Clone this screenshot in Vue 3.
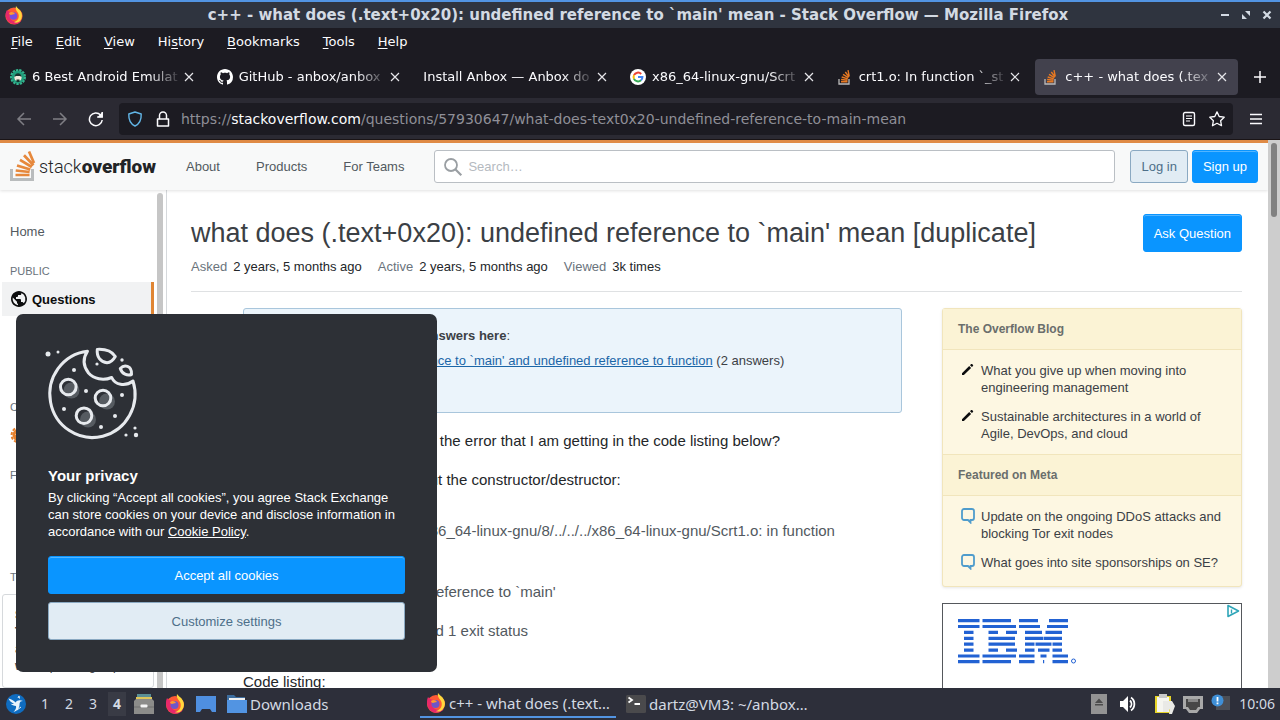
<template>
  <div class="desktop">
    <header class="titlebar">
      <svg class="icon-20" viewBox="0 0 20 20">
        <circle cx="10" cy="11" r="8.6" fill="#ff5a36" />
        <path d="M3 5C1 8 1 14 5 17c4 3.400 10 2.600 12.500-1.500C14 18 8 17 6 13 5 10 6 8 8 7 6 7 4 6 3 5z" fill="#e8286b" />
        <path d="M12 1c1 2 3 3 4.500 5 2 3 2 7-.5 10-2 2-5 2-6 1 4-1 6-5 4-9-1-2-3-3-2-7z" fill="#ffd83d" />
        <circle cx="9.500" cy="11" r="3.800" fill="#7a4be0" />
        <path d="M5 8c2-2 5-1 6 1-2 0-3 1-4 1s-2-1-2-2z" fill="#ff9a2e" />
      </svg>
      <h1>{{ windowTitle }} — Mozilla Firefox</h1>
      <div class="window-controls">
        <button aria-label="Minimize">
          <svg width="10" height="10" viewBox="0 0 10 10"><path d="M1 5h8" stroke="#d3dae3" stroke-width="2" /></svg>
        </button>
        <button aria-label="Restore">
          <svg width="10" height="10" viewBox="0 0 10 10"><path d="M4 1h5v5zM1 4v5h5z" fill="#d3dae3" /></svg>
        </button>
        <button aria-label="Close">
          <svg width="10" height="10" viewBox="0 0 10 10"><path d="M1.500 1.500l7 7M8.500 1.500l-7 7" stroke="#d3dae3" stroke-width="2.200" /></svg>
        </button>
      </div>
    </header>

    <nav class="menubar">
      <button v-for="item in menus" :key="item.key + item.after">{{ item.before }}<u>{{ item.key }}</u>{{ item.after }}</button>
    </nav>

    <div class="tabstrip">
      <div class="tabs">
        <div v-for="tab in tabs" :key="tab.title" class="tab-slot">
          <div class="tab" :class="{ active: tab.active }">
            <svg v-if="tab.icon === 'android'" class="icon-16" viewBox="0 0 16 16">
              <circle cx="8" cy="8" r="6.500" fill="#1f9d7c" />
              <circle cx="8" cy="8" r="7" fill="none" stroke="#35b58f" stroke-width="2" stroke-dasharray="2.400 1" />
              <circle cx="8" cy="8.500" r="3.600" fill="#f2e9dc" />
              <path d="M4.500 8c0-5 7-5 7 0l-1.500-1h-4z" fill="#17332d" />
              <path d="M6.500 10.500h3V13h-3z" fill="#17332d" />
            </svg>
            <svg v-else-if="tab.icon === 'github'" class="icon-16" viewBox="0 0 16 16">
              <path fill="#fff" d="M8 0C3.580 0 0 3.580 0 8c0 3.540 2.290 6.530 5.470 7.590.4.070.55-.17.55-.38 0-.19-.01-.82-.01-1.490-2.010.37-2.530-.49-2.690-.94-.09-.23-.48-.94-.82-1.130-.28-.15-.68-.52-.01-.53.63-.01 1.080.58 1.230.82.72 1.210 1.870.87 2.330.66.07-.52.28-.87.51-1.070-1.780-.2-3.640-.89-3.640-3.950 0-.87.31-1.590.82-2.150-.08-.2-.36-1.020.08-2.120 0 0 .67-.21 2.200.82.64-.18 1.320-.27 2-.27s1.360.09 2 .27c1.530-1.040 2.200-.82 2.200-.82.44 1.100.16 1.920.08 2.120.51.56.82 1.270.82 2.150 0 3.070-1.870 3.750-3.650 3.950.29.25.54.73.54 1.480 0 1.070-.01 1.930-.01 2.200 0 .21.15.46.55.38A8.010 8.010 0 0 0 16 8c0-4.420-3.580-8-8-8z" />
            </svg>
            <svg v-else-if="tab.icon === 'google'" class="icon-16" viewBox="0 0 16 16">
              <circle cx="8" cy="8" r="8" fill="#fff" />
              <g fill="none" stroke-width="2">
                <path d="M11.200 5A4.400 4.400 0 0 0 4 6.200" stroke="#ea4335" />
                <path d="M4 6.200a4.400 4.400 0 0 0 0 3.600" stroke="#fbbc05" />
                <path d="M4 9.800a4.400 4.400 0 0 0 7 1.500" stroke="#34a853" />
                <path d="M8 8h4.400a4.400 4.400 0 0 1-1.400 3.300" stroke="#4285f4" />
              </g>
            </svg>
            <svg v-else-if="tab.icon === 'stack'" class="icon-16" viewBox="0 0 16 16">
              <path d="M2 10v5h10v-5" fill="none" stroke="#bcbbbb" stroke-width="1.300" />
              <path d="M4 12.800h6.500M4.100 10.500l6.400.7M4.700 8l6.100 1.800M6 5.300l5.400 3.400M8.300 3l3.900 5M11 1.200l1.200 6" stroke="#e87922" stroke-width="1.400" />
            </svg>
            <span class="tab-title">{{ tab.title }}</span>
            <button class="tab-close" aria-label="Close tab">
              <svg width="10" height="10" viewBox="0 0 10 10"><path d="M1 1l8 8M9 1L1 9" stroke="#e6e6ea" stroke-width="1.200" /></svg>
            </button>
          </div>
        </div>
      </div>
      <button class="new-tab" aria-label="New tab">
        <svg width="14" height="14" viewBox="0 0 14 14"><path d="M7 1v12M1 7h12" stroke="#fbfbfe" stroke-width="1.500" /></svg>
      </button>
    </div>

    <div class="toolbar">
      <button class="nav-btn dim" aria-label="Back">
        <svg class="icon-16" viewBox="0 0 16 16"><path d="M15 8H2M8 2L2 8l6 6" /></svg>
      </button>
      <button class="nav-btn dim" aria-label="Forward">
        <svg class="icon-16" viewBox="0 0 16 16"><path d="M1 8h13M8 2l6 6-6 6" /></svg>
      </button>
      <button class="nav-btn" aria-label="Reload">
        <svg class="icon-16" viewBox="0 0 16 16"><path d="M14.200 9A6.400 6.400 0 1 1 12.600 4M14.200 1v5h-5" /><path d="M14.500 1v5.200H9.300z" fill="#fbfbfe" stroke="none" /></svg>
      </button>
      <div class="urlbar">
        <div class="url-icons">
          <svg class="icon-16" viewBox="0 0 16 16"><path d="M8 1L14.200 3c.3 6-2 10-6.200 12C3.800 13 1.500 9 1.800 3z" fill="none" stroke="#62b5e6" stroke-width="1.400" stroke-linejoin="round" /></svg>
          <svg class="icon-16" viewBox="0 0 16 16"><path d="M2.500 8h11v7h-11zM4.500 8V4.500a3.500 3.500 0 0 1 7 0V8" fill="none" stroke="#fbfbfe" stroke-width="1.500" stroke-linejoin="round" /></svg>
        </div>
        <div class="url">https://<b>stackoverflow.com</b>/questions/57930647/what-does-text0x20-undefined-reference-to-main-mean</div>
        <div class="url-icons">
          <button aria-label="Reader view">
            <svg class="icon-16" viewBox="0 0 16 16"><rect x="2.500" y="1.500" width="11" height="13" rx="1.500" fill="none" stroke="#fbfbfe" stroke-width="1.400" /><path d="M5 5h6M5 7.500h6M5 10h4" stroke="#fbfbfe" stroke-width="1.200" /></svg>
          </button>
          <button aria-label="Bookmark this page">
            <svg class="icon-16" viewBox="0 0 16 16"><path d="M8 .9l2.200 4.600 5 .7-3.600 3.500.9 5L8 12.300l-4.500 2.400.9-5L.8 6.200l5-.7z" fill="none" stroke="#fbfbfe" stroke-width="1.300" stroke-linejoin="round" /></svg>
          </button>
        </div>
      </div>
      <button class="nav-btn" aria-label="Open application menu">
        <svg class="icon-16" viewBox="0 0 16 16"><path d="M2 3.500h12M2 8h12M2 12.500h12" /></svg>
      </button>
    </div>

    <div class="viewport">
      <div class="page">
        <header class="topbar">
          <a href="#" class="logo">
            <svg width="26" height="31" viewBox="0 0 26 31">
              <path d="M1.500 18v10.500h21V18" fill="none" stroke="#b9bcbd" stroke-width="3" />
              <path d="M5.500 24h14M5.700 19.500l13.900 1.500M7 14.500l13.300 4M10 8.800l11.800 7.200M14 4.200l9.500 10M19 .5l5 11.500" stroke="#e6883c" stroke-width="2.700" fill="none" />
            </svg>
            <span class="logo-text">stack<b>overflow</b></span>
          </a>
          <nav class="topnav">
            <a href="#">About</a>
            <a href="#">Products</a>
            <a href="#">For Teams</a>
          </nav>
          <label class="search">
            <svg width="20" height="20" viewBox="0 0 20 20"><circle cx="8" cy="8" r="6" fill="none" stroke="#9a9fa3" stroke-width="1.800" /><path d="M12.300 12.300l6 6" stroke="#9a9fa3" stroke-width="2.200" /></svg>
            <input type="text" placeholder="Search…" aria-label="Search" />
          </label>
          <div class="auth">
            <button class="btn btn-light">Log in</button>
            <button class="btn btn-primary">Sign up</button>
          </div>
        </header>

        <div class="container">
          <aside class="left-nav">
            <div class="left-list">
              <a href="#" class="left-link">Home</a>
              <template v-for="group in leftGroups" :key="group.label">
                <div class="left-label">{{ group.label }}</div>
                <a v-for="link in group.links" :key="link.text" href="#" class="left-link" :class="{ current: link.current, nested: !link.icon }">
                  <svg v-if="link.icon === 'globe'" width="18" height="18" viewBox="0 0 18 18"><path fill="#0c0d0e" d="M9 1C4.640 1 1 4.640 1 9c0 4.360 3.640 8 8 8 4.360 0 8-3.640 8-8 0-4.360-3.640-8-8-8zM8 15.320a6.460 6.460 0 0 1-4.300-2.740 6.460 6.460 0 0 1-.93-5.010L7 11.680v.8c0 .88.120 1.320 1 1.320v1.520zm5.720-2c-.2-.66-1-1.320-1.720-1.320h-1v-2c0-.44-.56-1-1-1H6V7h1c.44 0 1-.56 1-1V5h2c.88 0 1.400-.72 1.400-1.600v-.33a6.450 6.450 0 0 1 3.830 4.510 6.450 6.450 0 0 1-1.510 5.730z" /></svg>
                  <svg v-if="link.icon === 'star'" width="18" height="18" viewBox="0 0 18 18"><circle cx="9" cy="9" r="6.500" fill="#e6812d" /><circle cx="9" cy="9" r="7.400" fill="none" stroke="#e6812d" stroke-width="2" stroke-dasharray="3 1.600" /><path d="M9 5l1.200 2.600 2.800.3-2.100 1.900.6 2.800L9 11.200l-2.500 1.400.6-2.800L5 7.900l2.800-.3z" fill="#fff" /></svg>
                  {{ link.text }}
                </a>
              </template>
              <div class="left-label">TEAMS</div>
              <div class="teams-card"><b>Stack Overflow for Teams</b> – Collaborate and share knowledge with a private group.</div>
            </div>
            <div class="left-scroll"></div>
          </aside>

          <main class="content">
            <div class="question-head">
              <h2>what does (.text+0x20): undefined reference to `main' mean [duplicate]</h2>
              <button class="btn btn-primary btn-tall">Ask Question</button>
            </div>
            <div class="question-meta">
              <span v-for="stat in stats" :key="stat.label"><em>{{ stat.label }}</em>{{ stat.value }}</span>
            </div>

            <div class="columns">
              <article class="post">
                <div class="notice">
                  <p><b>This question already has answers here</b>:</p>
                  <p><a href="#">Linker error: Undefined reference to `main' and undefined reference to function</a> (2 answers)</p>
                  <p>Closed 2 years ago.</p>
                </div>
                <p>Could anyone please explain the error that I am getting in the code listing below?</p>
                <p>It is always complaining about the constructor/destructor:</p>
                <blockquote>
                  <p>/usr/bin/ld: /usr/lib/gcc/x86_64-linux-gnu/8/../../../x86_64-linux-gnu/Scrt1.o: in function `_start':</p>
                  <p>(.text+0x20): undefined reference to `main'</p>
                  <p>collect2: error: ld returned 1 exit status</p>
                </blockquote>
                <p>Code listing:</p>
              </article>

              <aside class="right-col">
                <div class="bulletin">
                  <section v-for="box in bulletin" :key="box.title">
                    <h3>{{ box.title }}</h3>
                    <ul>
                      <li v-for="entry in box.entries" :key="entry">
                        <svg v-if="box.icon === 'pencil'" width="14" height="14" viewBox="0 0 14 14"><path d="M1 11.200L8.200 4l1.900 1.900L2.900 13H1zM9 3.200l1.100-1.100c.3-.3.700-.3 1 0l.9.9c.3.300.3.700 0 1L10.900 5.100z" fill="#0c0d0e" /></svg>
                        <svg v-else width="14" height="16" viewBox="0 0 14 16"><path d="M3 1h8a2 2 0 0 1 2 2v7a2 2 0 0 1-2 2H9.500v2.500L7 12H3a2 2 0 0 1-2-2V3a2 2 0 0 1 2-2z" fill="none" stroke="#4f9ccc" stroke-width="1.800" /></svg>
                        <a href="#">{{ entry }}</a>
                      </li>
                    </ul>
                  </section>
                </div>
                <div class="ad">
                  <svg width="120" height="46" viewBox="0 0 120 46" role="img" aria-label="IBM">
                    <g stroke="#2262d3" stroke-width="3.200">
                      <path d="M0 1.600h21.500M0 7.500h21.500M6 13.400h9.500M6 19.300h9.500M6 25.200h9.500M6 31.100h9.500M0 37h21.500M0 42.700h21.500" />
                      <path d="M24.500 1.600H53M24.500 7.500H58M30.500 13.400H40M48 13.400h11M30.500 19.300H57M30.500 25.200H57M30.500 31.100H40M48 31.100h11M24.500 37H58M24.500 42.700H53" />
                      <path d="M61 1.600h19M91 1.600h19M61 7.500h21M89 7.500h21M67 13.400h17M87.500 13.400H104M67 19.300h18.500M86 19.300h18M67 25.200h9.500M77.500 25.200h16M94.500 25.200h9.500M67 31.100h9.500M80 31.100h11.500M94.500 31.100h9.500M61 37h15.500M82.500 37h6M94.500 37H110M61 42.700h15.500M85 42.700h1.200M94.500 42.700H110" />
                    </g>
                    <circle cx="115.500" cy="42" r="2" fill="none" stroke="#2262d3" />
                  </svg>
                  <a href="#" class="adchoices" aria-label="AdChoices">
                    <svg width="16" height="14" viewBox="0 0 16 14"><path d="M3 1.500L13.500 7 3 12.500z" fill="none" stroke="#2fa5b8" stroke-width="1.600" stroke-linejoin="round" /><path d="M6.500 5.500v4" stroke="#2fa5b8" stroke-width="1.400" /></svg>
                  </a>
                </div>
              </aside>
            </div>
          </main>
        </div>
      </div>
      <div class="page-scroll"><div class="thumb"></div></div>

      <section class="privacy">
        <svg class="cookie" width="90" height="92" viewBox="0 0 90 92">
          <g fill="#565b61">
            <circle cx="23.500" cy="44.500" r="8" />
            <circle cx="59" cy="55.500" r="8" />
            <circle cx="40" cy="73.500" r="8" />
          </g>
          <g fill="none" stroke="#e7eaee" stroke-width="3" stroke-linejoin="round">
            <path d="M39.500 5.200A42.600 43.300 0 1 0 85 35C77 41 67 39 63.700 31.500 55 35 46 33 40.500 27 35 20 35 12 39.500 5.200z" />
            <path d="M49.300 3.400C57 3 64 5.500 67.300 10.500 65 14.500 63 16.500 59 16.700 52.500 16 48.500 11 49.300 3.400z" />
            <path d="M72.300 22.500C76 18.500 84 19 83.500 28.500 79.500 30 74 28 72.300 22.500z" />
            <circle cx="20.300" cy="41" r="7.800" />
            <circle cx="55" cy="52" r="7.800" />
            <circle cx="36" cy="69.700" r="7.800" />
          </g>
          <g fill="#e7eaee">
            <circle v-for="dot in crumbs" :key="dot.join()" :cx="dot[0]" :cy="dot[1]" :r="dot[2]" />
          </g>
        </svg>
        <h2>Your privacy</h2>
        <p>By clicking “Accept all cookies”, you agree Stack Exchange can store cookies on your device and disclose information in accordance with our <a href="#">Cookie Policy</a>.</p>
        <button class="btn btn-primary btn-tall">Accept all cookies</button>
        <button class="btn btn-light btn-tall">Customize settings</button>
      </section>
    </div>

    <footer class="taskbar">
      <button class="launcher" aria-label="Menu">
        <svg class="icon-20" viewBox="0 0 20 20"><circle cx="10" cy="10" r="10" fill="#0f6cc0" /><path d="M2.500 4.500C6 5 8 7 9.500 8.500 11 6 14 5.500 17 7c-2.500 0-3.500 1-3.500 3.500 0 4-2.500 6.500-6 7.500 2-2 3-4 2.500-6C8 12 5.500 11 4.500 9.500c1 .5 2.500.7 3.500.5C5.500 8.500 3.500 7 2.500 4.500z" fill="#e9f3fb" /><path d="M12 4l1-2 .5 2.500M11 16l4-3" stroke="#e9f3fb" fill="none" /></svg>
      </button>
      <div class="workspaces">
        <button v-for="n in 4" :key="n" :class="{ active: n === 4 }">{{ n }}</button>
      </div>
      <div class="quick">
        <button aria-label="Archive">
          <svg class="icon-20" viewBox="0 0 20 20"><path d="M3 0h14v5H3z" fill="#5b8f95" /><path d="M2 3h16v4H2z" fill="#e0c65a" /><path d="M0 7l2-2h16l2 2v13H0z" fill="#8c8c8a" /><path d="M0 13h20" stroke="#6f6f6e" /><rect x="6.500" y="10.500" width="7" height="3" rx="1" fill="#f4f4f4" /></svg>
        </button>
        <button aria-label="Firefox">
          <svg class="icon-20" viewBox="0 0 20 20">
            <circle cx="10" cy="11" r="9" fill="#ff5a36" />
            <path d="M2 4C0 8 1 15 5 18c4 3 10 2 13-2-4 2-10 1-12-3-1-3 0-5 2-6-2 0-5-1-6-3z" fill="#e8286b" />
            <path d="M12 0c1 2 4 3 5.500 6 2 3 2 7-.5 10-2 3-6 3-7 2 5-1 7-6 5-10-1-2-4-4-3-8z" fill="#ffd83d" />
            <circle cx="9.500" cy="11" r="4" fill="#6f55c8" />
            <path d="M5 8c2-2 5-1 6 1-2 0-3 1-4 1s-2-1-2-2z" fill="#ff9a2e" />
          </svg>
        </button>
        <button aria-label="Show desktop">
          <svg class="icon-20" viewBox="0 0 20 20"><path d="M0 2h20v16h-4l-2-3H6l-2 3H0z" fill="#4f8fe0" /></svg>
        </button>
        <button class="task">
          <svg class="icon-20" viewBox="0 0 20 20"><path d="M0 1h7l2 2h9v4H0z" fill="#3d6d9e" /><path d="M2 4h16v4H2z" fill="#f1f1f1" /><path d="M0 6h20v13H0z" fill="#5294e2" /></svg>
          <span>Downloads</span>
        </button>
      </div>
      <button class="task running current">
        <svg class="icon-20" viewBox="0 0 20 20">
          <circle cx="10" cy="11" r="9" fill="#ff5a36" />
          <path d="M2 4C0 8 1 15 5 18c4 3 10 2 13-2-4 2-10 1-12-3-1-3 0-5 2-6-2 0-5-1-6-3z" fill="#e8286b" />
          <path d="M12 0c1 2 4 3 5.500 6 2 3 2 7-.5 10-2 3-6 3-7 2 5-1 7-6 5-10-1-2-4-4-3-8z" fill="#ffd83d" />
          <circle cx="9.500" cy="11" r="4" fill="#6f55c8" />
          <path d="M5 8c2-2 5-1 6 1-2 0-3 1-4 1s-2-1-2-2z" fill="#ff9a2e" />
        </svg>
        <span>c++ - what does (.text…</span>
      </button>
      <button class="task running">
        <svg class="icon-20" viewBox="0 0 20 20"><rect y="1" width="20" height="18" rx="1.500" fill="#4a4a4c" /><path d="M2.500 3.500L6 6 2.500 8.500M8.500 10h5.500" fill="none" stroke="#fff" stroke-width="1.800" /></svg>
        <span>dartz@VM3: ~/anbox…</span>
      </button>
      <div class="tray">
        <svg class="eject" width="16" height="20" viewBox="0 0 16 20"><path d="M0 0h16v20H0z" fill="#939393" /><path d="M8 4.500l4 4.500H4zM4 10h8v1.500H4z" fill="#4c4c4c" /></svg>
        <svg class="icon-20" viewBox="0 0 20 20"><path d="M1 7h3l5-5v16l-5-5H1z" fill="#fff" /><path d="M11 6.500c2 2 2 5 0 7M12 3.500c4.500 3 4.500 10 0 13" fill="none" stroke="#fff" stroke-width="1.800" /></svg>
        <svg class="icon-20 clip" viewBox="0 0 20 20"><path d="M0 2h16v17H0z" fill="#e7d529" /><path d="M2 3h12v15H2z" fill="#f5f5f0" /><path d="M4 0h8v4H4z" fill="#c9c9c9" /><path d="M8 7h9l3 5-3 8h-3l1-5-3 3H8z" fill="#e9e9e6" /></svg>
        <svg class="icon-20" viewBox="0 0 20 20"><path d="M0 2h20v13h-3l-3 4H6l-3-4H0z" fill="#a9a9a9" /><path d="M3 5h14v8h-2l-2 3H7l-2-3H3z" fill="#474747" /><path d="M6 5v3M8 5v3M10 5v3M12 5v3M14 5v3" stroke="#c9c9c9" /></svg>
        <svg class="icon-20" viewBox="0 0 20 20"><path d="M10 2h9v14H5v-5z" fill="#4b4e55" /><circle cx="6.500" cy="6.500" r="6" fill="#3f8fd6" /><path d="M6.500 3V7.500M6.500 8.500v1.800" stroke="#fff" stroke-width="1.800" /></svg>
        <time>10:06</time>
      </div>
    </footer>
  </div>
</template>

<script setup>
const windowTitle = "c++ - what does (.text+0x20): undefined reference to `main' mean - Stack Overflow"

const menus = [
  { before: '', key: 'F', after: 'ile' },
  { before: '', key: 'E', after: 'dit' },
  { before: '', key: 'V', after: 'iew' },
  { before: 'Hi', key: 's', after: 'tory' },
  { before: '', key: 'B', after: 'ookmarks' },
  { before: '', key: 'T', after: 'ools' },
  { before: '', key: 'H', after: 'elp' }
]

const tabs = [
  { icon: 'android', title: '6 Best Android Emulat' },
  { icon: 'github', title: 'GitHub - anbox/anbox' },
  { icon: '', title: 'Install Anbox — Anbox do' },
  { icon: 'google', title: 'x86_64-linux-gnu/Scrt' },
  { icon: 'stack', title: 'crt1.o: In function `_st' },
  { icon: 'stack', title: 'c++ - what does (.tex', active: true }
]

const leftGroups = [
  {
    label: 'PUBLIC',
    links: [
      { text: 'Questions', icon: 'globe', current: true },
      { text: 'Tags' },
      { text: 'Users' }
    ]
  },
  { label: 'COLLECTIVES', links: [{ text: 'Explore Collectives', icon: 'star' }] },
  { label: 'FIND A JOB', links: [{ text: 'Jobs' }, { text: 'Companies' }] }
]

const stats = [
  { label: 'Asked', value: '2 years, 5 months ago' },
  { label: 'Active', value: '2 years, 5 months ago' },
  { label: 'Viewed', value: '3k times' }
]

const bulletin = [
  {
    title: 'The Overflow Blog',
    icon: 'pencil',
    entries: [
      'What you give up when moving into engineering management',
      'Sustainable architectures in a world of Agile, DevOps, and cloud'
    ]
  },
  {
    title: 'Featured on Meta',
    icon: 'bubble',
    entries: [
      'Update on the ongoing DDoS attacks and blocking Tor exit nodes',
      'What goes into site sponsorships on SE?'
    ]
  }
]

// x, y, radius
const crumbs = [
  [0, 8, 2.5], [10, 6, 1.5], [26, 24, 2], [49, 18, 1.6], [74, 14, 1.7],
  [38, 45, 2], [74, 49, 2], [16, 63, 2], [67, 70, 2], [53, 81, 2],
  [87, 82, 1.6], [78, 89, 1.6], [88, 89, 2.2]
]
</script>

<style>
body {
  background: #2d2f3a;
}
</style>

<style scoped>
* {
  box-sizing: border-box;
}

.desktop {
  display: flex;
  flex-direction: column;
  height: 100vh;
  overflow: hidden;
  font-family: "Liberation Sans", Arial, sans-serif;
  font-size: 13px;
  line-height: 17px;
}

h1, h2, h3, p, ul, blockquote {
  margin: 0;
  padding: 0;
}

button {
  background: none;
  border: none;
  padding: 0;
  font: inherit;
  color: inherit;
  cursor: pointer;
}

a {
  color: inherit;
  text-decoration: none;
}

svg {
  display: block;
  flex-shrink: 0;
}

.icon-16 {
  width: 16px;
  height: 16px;
}

.icon-20 {
  width: 20px;
  height: 20px;
}

/* window frame */
.titlebar {
  display: flex;
  align-items: center;
  height: 28px;
  padding: 0 8px 0 4px;
  border-top: 2px solid #5294e2;
  background: #2f343f;
  color: #d3dae3;
}

.titlebar h1 {
  flex: 1;
  padding-left: 32px;
  text-align: center;
  font: bold 15px/20px "DejaVu Sans", sans-serif;
  white-space: nowrap;
}

.window-controls {
  display: flex;
  gap: 11px;
}

.menubar {
  display: flex;
  gap: 23px;
  height: 28px;
  padding: 0 11px;
  background: #1c1b22;
  color: #fbfbfe;
  font: 13px/26px "DejaVu Sans", sans-serif;
}

.menubar u {
  text-underline-offset: 2px;
}

.tabstrip {
  display: flex;
  height: 42px;
  background: #1c1b22;
  color: #fbfbfe;
  font: 13px/20px "DejaVu Sans", sans-serif;
}

.tabs {
  flex: 1;
  display: grid;
  grid-template-columns: repeat(6, minmax(0, 1fr));
}

.tab-slot {
  padding: 3px 2px;
}

.tab {
  display: flex;
  align-items: center;
  gap: 6px;
  height: 36px;
  padding: 0 11px 0 8px;
  border-radius: 4px;
}

.tab.active {
  background: #42414d;
}

.tab-title {
  flex: 1;
  white-space: nowrap;
  mask-image: linear-gradient(to left, transparent 0, #000 32px);
}

.tab-close {
  margin-left: -4px;
}

.new-tab {
  display: flex;
  align-items: center;
  justify-content: center;
  width: 40px;
}

.toolbar {
  display: flex;
  align-items: center;
  gap: 20px;
  height: 42px;
  padding: 0 16px;
  border-bottom: 1px solid #1a1416;
  background: #2b2a33;
}

.nav-btn path {
  fill: none;
  stroke: #fbfbfe;
  stroke-width: 1.5;
}

.nav-btn path[stroke="none"] {
  fill: #fbfbfe;
  stroke: none;
}

.nav-btn.dim {
  opacity: 0.4;
}

.urlbar {
  flex: 1;
  display: flex;
  align-items: center;
  gap: 10px;
  height: 32px;
  padding: 0 8px;
  margin: 0 -5px;
  border-radius: 4px;
  background: #1c1b22;
}

.url-icons {
  display: flex;
  gap: 12px;
}

.url {
  flex: 1;
  color: #8f8f97;
  font: 14px/20px "DejaVu Sans", sans-serif;
  white-space: nowrap;
  overflow: hidden;
}

.url b {
  color: #fbfbfe;
  font-weight: normal;
}

/* page */
.viewport {
  position: relative;
  flex: 1;
  min-height: 0;
  display: flex;
  background: #fff;
}

.page {
  flex: 1;
  min-width: 0;
  overflow: hidden;
}

.page-scroll {
  width: 12px;
  padding: 3px;
  background: #cdcdcd;
}

.thumb {
  height: 74px;
  border-radius: 3px;
  background: #808080;
}

.topbar {
  position: relative;
  display: flex;
  align-items: center;
  height: 50px;
  padding: 0 10px;
  border-top: 3px solid #df8a45;
  background: #f8f9f9;
  box-shadow: 0 1px 3px rgba(0, 0, 0, 0.12);
}

.logo {
  display: flex;
  align-items: center;
  gap: 3px;
  color: #222426;
}

.logo-text {
  font: 300 18px/24px Roboto, sans-serif;
}

.logo-text b {
  font-size: 19px;
  font-weight: 900;
}

.topnav {
  display: flex;
  gap: 36px;
  margin: 0 30px;
  color: #525960;
}

.search {
  flex: 1;
  display: flex;
  align-items: center;
  gap: 5px;
  height: 33px;
  padding: 0 8px;
  border: 1px solid #babfc4;
  border-radius: 3px;
  background: #fff;
}

.search input {
  flex: 1;
  border: none;
  outline: none;
  padding: 0;
  background: none;
  font: inherit;
}

.search input::placeholder {
  color: #b5babf;
  opacity: 1;
}

.auth {
  display: flex;
  gap: 4px;
  margin-left: 15px;
}

.btn {
  height: 33px;
  padding: 0 10px;
  border: 1px solid transparent;
  border-radius: 3px;
  white-space: nowrap;
}

.btn-primary {
  background: #0a95ff;
  border-color: #0a95ff;
  box-shadow: inset 0 1px 0 rgba(255, 255, 255, 0.3);
  color: #fff;
}

.btn-light {
  background: #e1ecf4;
  border-color: #8aa9c2;
  color: #4d6f89;
}

.btn-tall {
  height: 38px;
}

.container {
  display: flex;
  max-width: 1264px;
  margin: 0 auto;
}

.left-nav {
  flex: none;
  display: flex;
  width: 165px;
  border-right: 1px solid #d6d9dc;
}

.left-list {
  flex: 1;
  padding-top: 24px;
}

.left-link {
  display: flex;
  align-items: center;
  gap: 4px;
  height: 34px;
  padding-left: 8px;
  color: #525960;
  white-space: nowrap;
}

.left-link.current {
  border-right: 3px solid #e08533;
  background: #f1f2f3;
  color: #0c0d0e;
  font-weight: bold;
}

.left-link.nested {
  padding-left: 30px;
}

.left-link:first-child {
  padding-left: 8px;
}

.left-label {
  margin: 15px 0 3px;
  padding-left: 8px;
  color: #6a737c;
  font-size: 11px;
  line-height: 16px;
}

.teams-card {
  margin-top: 9px;
  padding: 12px;
  border: 1px solid #d6d9dc;
  border-radius: 3px;
  color: #3b4045;
  font-size: 12px;
}

.left-scroll {
  width: 6px;
  margin: 3px 3px 0;
  border-radius: 3px;
  background: #c6c6c6;
}

.content {
  flex: 1;
  min-width: 0;
  padding: 24px;
}

.question-head {
  display: flex;
  justify-content: space-between;
  gap: 12px;
}

.question-head h2 {
  color: #3b4045;
  font-size: 27px;
  font-weight: normal;
  line-height: 38px;
}

.question-meta {
  display: flex;
  gap: 16px;
  padding: 6px 0 16px;
  border-bottom: 1px solid #dfe1e3;
  color: #232629;
}

.question-meta em {
  margin-right: 6px;
  color: #6a737c;
  font-style: normal;
}

.columns {
  display: grid;
  grid-template-columns: minmax(0, 1fr) 300px;
  gap: 40px;
  padding-top: 16px;
}

.post {
  display: flex;
  flex-direction: column;
  gap: 17px;
  padding-left: 52px;
  color: #232629;
  font-size: 15px;
  line-height: 22px;
}

.notice {
  display: flex;
  flex-direction: column;
  gap: 8px;
  padding: 18px 16px;
  border: 1px solid #a9c6dc;
  border-radius: 3px;
  background: #ebf4fb;
  color: #3b4045;
  font-size: 13px;
  line-height: 17px;
}

.notice a {
  color: #1b66a8;
  text-decoration: underline;
}

blockquote {
  display: flex;
  flex-direction: column;
  gap: 17px;
  margin: 0 11px;
  padding: 12px 15px;
  border-left: 4px solid #c8ccd0;
  color: #525960;
}

.bulletin {
  border: 1px solid #f1e5bc;
  border-radius: 3px;
  background: #fdf7e2;
  box-shadow: 0 1px 3px rgba(0, 0, 0, 0.1);
  color: #3b4045;
}

.bulletin h3 {
  padding: 12px 15px 11px;
  border-bottom: 1px solid #f1e5bc;
  background: #fbf3d5;
  color: #6a6e6c;
  font-size: 12px;
}

.bulletin section + section h3 {
  border-top: 1px solid #f1e5bc;
}

.bulletin ul {
  display: flex;
  flex-direction: column;
  gap: 12px;
  padding: 12px 15px;
  list-style: none;
}

.bulletin section:last-child ul {
  padding-bottom: 15px;
}

.bulletin li {
  display: flex;
  gap: 6px;
}

.bulletin li svg {
  margin-left: 3px;
}

.ad {
  position: relative;
  height: 250px;
  margin-top: 16px;
  padding: 15px;
  border: 1px solid #55585c;
  background: #fff;
}

.adchoices {
  position: absolute;
  top: 0;
  right: 0;
  background: #fff;
}

.privacy {
  position: absolute;
  left: 16px;
  bottom: 16px;
  display: flex;
  flex-direction: column;
  gap: 8px;
  width: 421px;
  padding: 32px;
  border-radius: 7px;
  background: #2d3036;
  color: #fff;
}

.cookie {
  overflow: visible;
  margin-bottom: 20px;
}

.privacy h2 {
  font-size: 15px;
  line-height: 20px;
}

.privacy p {
  margin: -5px 0 8px;
}

.privacy p a {
  text-decoration: underline;
}

/* desktop panel */
.taskbar {
  display: flex;
  align-items: center;
  height: 32px;
  padding: 0 5px 0 6px;
  background: #2d2f3a;
  color: #d3dae3;
  font: 14px/20px "Noto Sans", sans-serif;
}

.workspaces {
  display: flex;
  gap: 6px;
  margin: 0 8px 0 10px;
}

.workspaces button {
  width: 18px;
  height: 24px;
}

.workspaces .active {
  background: #393b45;
  font-weight: bold;
}

.quick {
  flex: none;
  display: flex;
  align-items: center;
  gap: 11px;
  width: 286px;
}

.task {
  display: flex;
  align-items: center;
  gap: 3px;
  font-size: 15px;
  white-space: nowrap;
}

.running {
  width: 196px;
  height: 28px;
  margin-right: 4px;
  padding-left: 6px;
}

.running.current {
  border-bottom: 2px solid #5294e2;
}

.tray {
  display: flex;
  align-items: center;
  gap: 8px;
  margin-left: auto;
}

.tray .eject {
  margin-right: 4px;
}

.tray .clip {
  margin-left: 8px;
}
</style>
